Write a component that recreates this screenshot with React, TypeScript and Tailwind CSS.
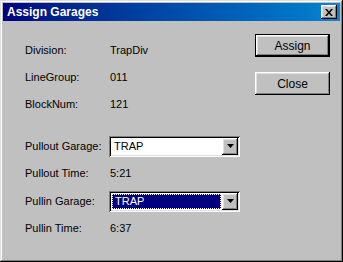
const raised =
  'shadow-[inset_-1px_-1px_0_#000,inset_1px_1px_0_#fff,inset_-2px_-2px_0_#808080,inset_2px_2px_0_#dfdfdf]';
const sunken =
  'shadow-[inset_1px_1px_0_#808080,inset_-1px_-1px_0_#fff,inset_2px_2px_0_#000,inset_-2px_-2px_0_#dfdfdf]';

const Combo = ({ value, focused }: { value: string; focused?: boolean }) => (
  <div className={`relative flex h-[21px] w-[131px] items-stretch bg-white p-[2px] ${sunken}`}>
    <div className="flex flex-1 items-stretch p-[1px]">
      {focused ? (
        <div className="flex flex-1 items-center border border-dotted border-white bg-[#000080] pl-[2px] text-white">
          {value}
        </div>
      ) : (
        <div className="flex flex-1 items-center pl-[2px] text-black">{value}</div>
      )}
    </div>
    <div className={`flex w-[16px] items-center justify-center bg-[#c0c0c0] ${raised}`}>
      <svg width="7" height="4" viewBox="0 0 7 4">
        <path d="M0 0h7L3.5 4z" fill="#000" />
      </svg>
    </div>
  </div>
);

const Row = ({ label, children, tall }: { label: string; children: React.ReactNode; tall?: boolean }) => (
  <div className={`flex items-center ${tall ? 'h-[28px]' : 'h-[27px]'}`}>
    <div className="w-[84px]">{label}</div>
    <div className={tall ? '' : 'pl-[1px]'}>{children}</div>
  </div>
);

const Button = ({ label, primary }: { label: string; primary?: boolean }) => (
  <div className={primary ? 'border border-black' : ''}>
    <div
      className={`flex items-center justify-center bg-[#c0c0c0] text-[12px] text-black ${raised} ${
        primary ? 'h-[21px] w-[73px]' : 'h-[23px] w-[75px]'
      }`}
    >
      {label}
    </div>
  </div>
);

export default function App() {
  return (
    <div
      className="flex h-[262px] w-[343px] flex-col bg-[#c0c0c0] p-[3px] text-[11px] text-black shadow-[inset_-1px_-1px_0_#000,inset_1px_1px_0_#dfdfdf,inset_-2px_-2px_0_#808080,inset_2px_2px_0_#fff]"
      style={{ fontFamily: '"Liberation Sans", Arial, sans-serif' }}
    >
      <div className="flex h-[18px] items-center justify-between bg-gradient-to-r from-[#000080] to-[#1084d0] pl-[4px] pr-[3px]">
        <span className="text-[12px] font-bold text-white">Assign Garages</span>
        <div className={`flex h-[14px] w-[16px] items-center justify-center bg-[#c0c0c0] ${raised}`}>
          <svg width="8" height="7" viewBox="0 0 8 7">
            <path d="M0 0h2l2 2.5L6 0h2L5 3.5 8 7H6L4 4.5 2 7H0l3-3.5z" fill="#000" />
          </svg>
        </div>
      </div>

      <div className="flex flex-1">
        <div className="flex flex-1 flex-col pl-[22px] pt-[16px]">
          <Row label="Division:">TrapDiv</Row>
          <Row label="LineGroup:">011</Row>
          <Row label="BlockNum:">121</Row>
          <div className="h-[14px]" />
          <Row label="Pullout Garage:" tall>
            <Combo value="TRAP" />
          </Row>
          <Row label="Pullout Time:">5:21</Row>
          <Row label="Pullin Garage:" tall>
            <Combo value="TRAP" focused />
          </Row>
          <Row label="Pullin Time:">6:37</Row>
        </div>

        <div className="mr-[10px] flex w-[75px] flex-col gap-[15px] pt-[13px]">
          <Button label="Assign" primary />
          <Button label="Close" />
        </div>
      </div>
    </div>
  );
}
